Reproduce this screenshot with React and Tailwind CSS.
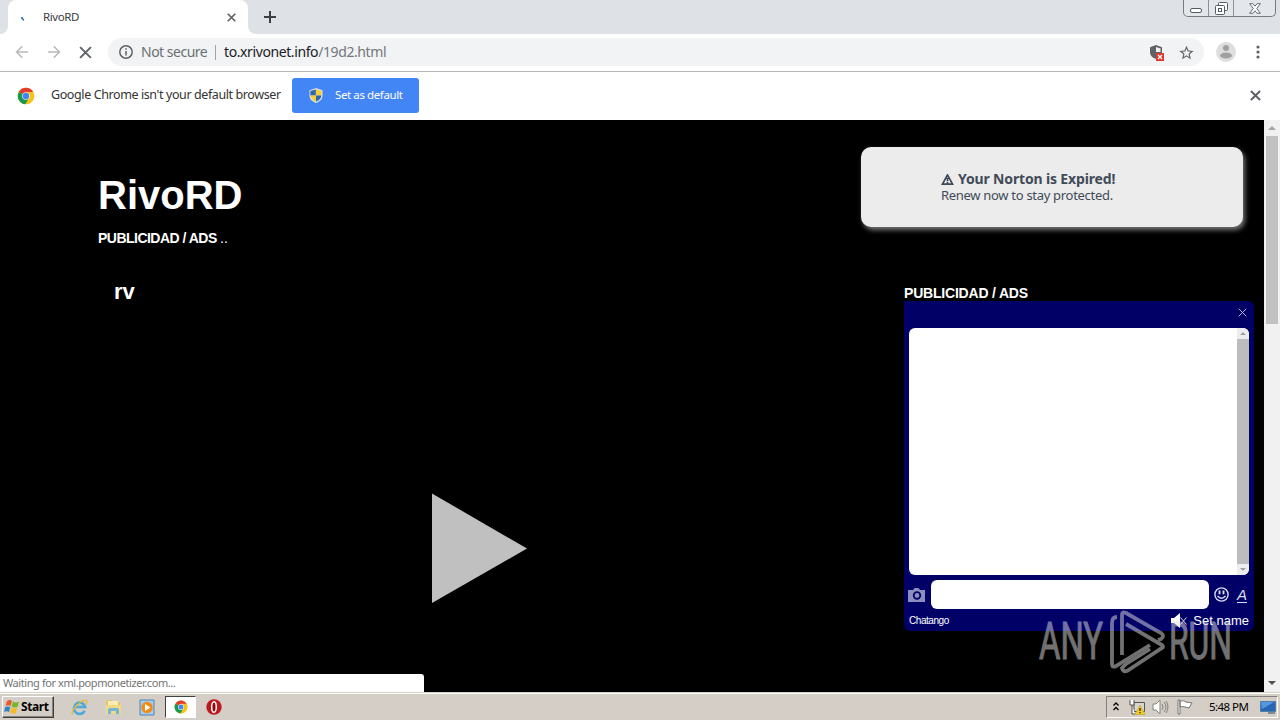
import React from 'react';

const uiFont = "font-['Noto_Sans','Open_Sans',sans-serif]";

const ChromeLogo = ({ className }) => (
    <svg viewBox="0 0 48 48" className={className}>
        <circle cx="24" cy="24" r="22" fill="#fbc116" />
        <path d="M24 24 4.9 13A22 22 0 0 1 43 13Z" fill="#e33b2e" />
        <path d="M24 24 4.9 13A22 22 0 0 0 22 46l11-18Z" fill="#1a9850" />
        <path d="M24 13h19a22 22 0 0 1-19 33l10-17Z" fill="#fbc116" />
        <circle cx="24" cy="24" r="10" fill="#fff" />
        <circle cx="24" cy="24" r="8.5" fill="#4285f4" />
    </svg>
);

const Cross = ({ className, width = 2 }) => (
    <svg viewBox="0 0 12 12" className={className} fill="none" stroke="currentColor" strokeWidth={width}>
        <path d="M1 1l10 10M11 1L1 11" />
    </svg>
);

const Arrow = ({ className }) => (
    <svg viewBox="0 0 16 16" className={className} fill="none" stroke="#bababa" strokeWidth="1.8">
        <path d="M15 8H2M8.3 1.5L1.8 8l6.5 6.5" />
    </svg>
);

const WindowButtons = () => (
    <div className="ml-auto mr-[4px] flex h-[17px] w-[93px] rounded-b-[5px] border border-t-0 border-[#777b83] bg-[#e3e6eb]">
        <div className="flex w-[25px] items-end justify-center border-r border-[#8b8f96] pb-[3px]">
            <svg viewBox="0 0 13 5" className="h-[5px] w-[13px]"><rect x=".5" y=".5" width="11" height="4" rx="1.5" fill="#fff" stroke="#555a65" /></svg>
        </div>
        <div className="flex w-[25px] justify-center border-r border-[#8b8f96] pt-[2px]">
            <svg viewBox="0 0 13 13" className="h-[13px] w-[13px]" fill="#fff" stroke="#555a65">
                <rect x="3.5" y=".5" width="9" height="8" rx="1" />
                <rect x=".5" y="3.5" width="9" height="9" rx="1" />
                <rect x="3.5" y="6.5" width="3" height="3" />
            </svg>
        </div>
        <div className="flex flex-1 justify-center pt-[3px]">
            <svg viewBox="0 0 12 11" className="h-[11px] w-[12px]" fill="#fff" stroke="#555a65" strokeWidth=".9">
                <path d="M.7.7h3.2L6 3.2 8.1.7h3.2L7.8 5.5l3.5 4.8H8.1L6 7.8l-2.1 2.5H.7l3.5-4.8Z" />
            </svg>
        </div>
    </div>
);

const TabStrip = () => (
    <div className="flex h-[34px] bg-[#dee1e6]">
        <div className="flex w-2 items-end">
            <svg viewBox="0 0 8 8" className="h-2 w-2"><path d="M8 0v8H0a8 8 0 0 0 8-8" fill="#fff" /></svg>
        </div>
        <div className="flex w-[240px] items-center rounded-t-[8px] bg-white pl-[12px] pr-[12px]">
            <svg viewBox="0 0 6 6" className="mt-[4px] h-[6px] w-[6px]"><path d="M1.800 1q.2 2 2 3.300" stroke="#4477b5" strokeWidth="2" fill="none" /></svg>
            <span className="ml-[17px] text-[11.500px] leading-[16px] tracking-[-0.4px] text-[#3c4043]">RivoRD</span>
            <Cross className="ml-auto h-[9px] w-[9px] text-[#5f6368]" width={2.3} />
        </div>
        <div className="flex w-2 items-end">
            <svg viewBox="0 0 8 8" className="h-2 w-2"><path d="M0 0v8h8a8 8 0 0 1-8-8" fill="#fff" /></svg>
        </div>
        <svg viewBox="0 0 12 12" className="ml-[8px] mt-[11px] h-[12px] w-[12px]"><path d="M6 0v12M0 6h12" stroke="#3c4043" strokeWidth="2" /></svg>
        <WindowButtons />
    </div>
);

const Toolbar = () => (
    <div className="flex h-[38px] items-center border-b border-[#b5b8b5] bg-white pb-px pl-[15px]">
        <Arrow className="h-[14px] w-[14px]" />
        <Arrow className="ml-[18px] h-[14px] w-[14px] rotate-180" />
        <Cross className="ml-[18px] h-[13px] w-[13px] text-[#5f6368]" width={1.8} />
        <div className="ml-[16px] flex h-[28px] w-[1096px] items-center rounded-full bg-[#f1f3f4] pl-[11px] pr-[10px]">
            <svg viewBox="0 0 14 14" className="h-[14px] w-[14px]" fill="none" stroke="#5f6368" strokeWidth="1.5">
                <circle cx="7" cy="7" r="6.2" />
                <path d="M7 6v4.4M7 3.2v1.6" />
            </svg>
            <span className="ml-[8px] w-[67px] whitespace-nowrap text-[14px] leading-[20px] tracking-[-0.5px] text-[#6b6f73]">Not secure</span>
            <span className="ml-[7px] h-[15px] w-px bg-[#a0a3a6]" />
            <span className="ml-[8px] whitespace-nowrap text-[14px] leading-[20px] tracking-[-0.4px] text-[#202124]">
                to.xrivonet.info<span className="text-[#73777b]">/19d2.html</span>
            </span>
            <svg viewBox="0 0 14 16" className="ml-auto mr-[15px] mt-[2px] h-[16px] w-[14px]">
                <path d="M6 0l6 2.2V7c0 3.5-2.5 6-6 7-3.500-1-6-3.500-6-7V2.200Z" fill="#5f6368" />
                <path d="M6 2l4.500 1.500V7H6Z" fill="#f1f3f4" />
                <path d="M6 8h8v8H6Z" fill="#df382c" />
                <path d="M8 10l4 4M12 10l-4 4" stroke="#fff" strokeWidth="1.300" />
            </svg>
            <svg viewBox="1.500 1 21 21" className="h-[15px] w-[15px]" fill="#5f6368">
                <path d="M22 9.240l-7.190-.62L12 2 9.190 8.630 2 9.240l5.460 4.730L5.820 21 12 17.270 18.180 21l-1.630-7.030L22 9.240zM12 15.400l-3.760 2.270 1-4.280-3.320-2.880 4.380-.38L12 6.100l1.710 4.040 4.380.38-3.320 2.880 1 4.280L12 15.400z" />
            </svg>
        </div>
        <svg viewBox="0 0 20 20" className="ml-[12px] h-[20px] w-[20px]">
            <circle cx="10" cy="10" r="10" fill="#dedede" />
            <circle cx="10" cy="6" r="3" fill="#a0a0a0" />
            <ellipse cx="10" cy="13.500" rx="6" ry="3" fill="#a0a0a0" />
        </svg>
        <svg viewBox="0 0 4 14" className="ml-[20px] h-[14px] w-[4px]" fill="#5f6368">
            <circle cx="2" cy="2" r="1.600" />
            <circle cx="2" cy="7" r="1.600" />
            <circle cx="2" cy="12" r="1.600" />
        </svg>
    </div>
);

const InfoBar = () => (
    <div className="flex h-[48px] items-center bg-white pb-[2px] pl-[17px] pr-[19px]">
        <ChromeLogo className="mt-px h-[18px] w-[18px]" />
        <span className="ml-[16px] w-[241px] whitespace-nowrap text-[12.500px] leading-[18px] tracking-[-0.4px] text-[#333]">
            Google Chrome isn&apos;t your default browser
        </span>
        <button className="flex h-[35px] w-[127px] items-center rounded-[3px] bg-[#4285f4] pl-[17px] text-[11.500px] tracking-[-0.4px] text-white">
            <svg viewBox="0 0 14 16" className="mr-[12px] h-[15px] w-[14px]">
                <path d="M7 0l7 2.500V8c0 4-3 6.500-7 8-4-1.500-7-4-7-8V2.500Z" fill="#d7dfe0" />
                <path d="M6.800 1.500V8H1V3.300Z" fill="#3067aa" />
                <path d="M7 1.500l6 1.800V8H7Z" fill="#f4cf37" />
                <path d="M1.200 8H7v6.500Q2 12.500 1.200 8" fill="#f4cf37" />
                <path d="M7 8h5.800Q12 12.500 7 14.500" fill="#3067aa" />
            </svg>
            Set as default
        </button>
        <Cross className="ml-auto mt-px h-[11px] w-[11px] text-[#5f6368]" width={2.2} />
    </div>
);

const NortonPopup = () => (
    <div className="absolute left-[861px] top-[27px] h-[80px] w-[382px] rounded-[10px] bg-[#ececec] pl-[80px] pt-[24px] text-[#414b58] shadow-[2px_3px_5px_#777]">
        <p className="flex items-center whitespace-nowrap text-[14px] font-bold leading-[16px] tracking-[-0.15px]">
            <svg viewBox="0 0 13 12" className="mr-[4px] h-[11px] w-[13px]" fill="none" stroke="#414b58" strokeWidth="1.900">
                <path d="M6.500 1L1 11h11ZM6.500 4v3.600M6.500 8.400v1.600" />
            </svg>
            Your Norton is Expired!
        </p>
        <p className="whitespace-nowrap text-[13px] leading-[16px] tracking-[-0.3px]">Renew now to stay protected.</p>
    </div>
);

const ChatBox = () => (
    <div className="flex h-[330px] w-[350px] flex-col rounded-[6px] rounded-tl-none bg-[#000066] px-[5px] font-['Liberation_Sans',sans-serif] text-white">
        <div className="flex h-[27px] shrink-0 justify-end pr-[2px] pt-[7px]">
            <Cross className="h-[9px] w-[9px] text-[#b8b8dc]" width={1.3} />
        </div>
        <div className="flex h-[247px] shrink-0 justify-end overflow-hidden rounded-[6px] bg-white">
            <div className="flex w-[12px] flex-col items-center justify-between bg-[#ededed]">
                <svg viewBox="0 0 6 3" className="my-[4px] h-[3px] w-[6px]"><path d="M0 3l3-3 3 3" fill="#a0a0a0" /></svg>
                <div className="w-full flex-1 bg-[#bcbcbc]" />
                <svg viewBox="0 0 6 3" className="my-[4px] h-[3px] w-[6px]"><path d="M0 0l3 3 3-3" fill="#a0a0a0" /></svg>
            </div>
        </div>
        <div className="-ml-px mt-[5px] flex h-[29px] shrink-0 items-center">
            <svg viewBox="0 0 17 14" className="h-[14px] w-[17px]">
                <path d="M0 2h5l1.500-2h4L12 2h5v12H0Z" fill="#8c8cbd" />
                <circle cx="9" cy="7.500" r="3.300" fill="#8c8cbd" stroke="#000066" strokeWidth="1.800" />
            </svg>
            <div className="ml-[6px] h-[29px] w-[278px] rounded-[6px] bg-white" />
            <svg viewBox="0 0 15 15" className="ml-[5px] h-[15px] w-[15px]" fill="none" stroke="#dadaf0" strokeWidth="1.400">
                <circle cx="7.500" cy="7.500" r="6.600" />
                <path d="M5.500 3.500v3.800M9.500 3.500v3.800" strokeWidth="1.900" />
                <path d="M3.500 9q4 4.500 8 0" />
            </svg>
            <span className="ml-[8px] text-[15px] italic leading-[15px] text-[#dadaf0] underline underline-offset-2">A</span>
        </div>
        <div className="flex h-[22px] items-center pt-[2px]">
            <span className="text-[10px] leading-[12px] tracking-[-0.45px]">Chatango</span>
            <svg viewBox="0 0 17 16" className="ml-auto mr-[5px] h-[16px] w-[17px]">
                <path d="M0 5h3l6-5v15l-6-5H0Z" fill="#fff" />
                <path d="M9.500 4.500l6 7M15.500 4.500l-6 7" stroke="#dadaf0" />
            </svg>
            <span className="whitespace-nowrap text-[13px] leading-[16px]">Set name</span>
        </div>
    </div>
);

const Watermark = () => (
    <svg viewBox="0 0 210 80" className="absolute left-[1035px] top-[485px] h-[80px] w-[210px] opacity-50" fontFamily="Roboto, sans-serif">
        <g fill="#e2e2e2" stroke="#e2e2e2" strokeWidth=".9" fontSize="51">
            <text x="4" y="54" textLength="64" lengthAdjust="spacingAndGlyphs">ANY</text>
            <text x="134" y="54" textLength="63" lengthAdjust="spacingAndGlyphs">RUN</text>
        </g>
        <g fill="none" stroke="#e2e2e2" strokeWidth="3.800">
            <path d="M82 12q-5 0-5 6v41q0 4 4 2l34-21" />
            <path d="M87 50V10q0-4 4-2l35 20q4 3 0 6l-3 1" />
            <path d="M91 19l36 21q2 2 0 3L92 66q-4 1-5-3l4-4 24-15" />
        </g>
    </svg>
);

const PageScrollbar = () => (
    <div className="flex w-4 flex-col items-center bg-[#f1f1f1]">
        <svg viewBox="0 0 8 4" className="my-[6px] h-[4px] w-[8px]"><path d="M0 4l4-4 4 4" fill="#a3a3a3" /></svg>
        <div className="h-[188px] w-[12px] bg-[#c1c1c1]" />
        <svg viewBox="0 0 8 4" className="mb-[7px] mt-auto h-[4px] w-[8px]"><path d="M0 0l4 4 4-4" fill="#505050" /></svg>
    </div>
);

const WebPage = () => (
    <div className="relative flex h-[572px] bg-black">
        <main className="flex flex-1 pl-[98px] font-['Liberation_Sans',sans-serif] text-white">
            <section className="w-[806px] pt-[50px]">
                <h1 className="text-[40px] font-bold leading-[50px]">RivoRD</h1>
                <p className="mt-[9px] text-[14px] font-bold leading-[18px] tracking-[-0.52px]">PUBLICIDAD / ADS <span className="font-normal tracking-normal">..</span></p>
                <h2 className="ml-[16px] mt-[32px] text-[22px] font-bold leading-[26px]">rv</h2>
                <svg viewBox="0 0 95 110" className="ml-[334px] mt-[188px] h-[110px] w-[95px]"><path d="M0 .5l95 55L0 110Z" fill="#c0c0c0" /></svg>
            </section>
            <aside className="w-[350px] pt-[164px]">
                <p className="text-[14px] font-bold leading-[18px] tracking-[-0.2px]">PUBLICIDAD / ADS</p>
                <div className="-mt-px"><ChatBox /></div>
            </aside>
        </main>
        <PageScrollbar />
        <NortonPopup />
        <Watermark />
        <div className="absolute bottom-0 left-0 h-[18px] w-[424px] whitespace-nowrap rounded-tr-[3px] bg-white pl-[3px] text-[11px] leading-[18px] tracking-[-0.42px] text-[#747474]">
            Waiting for xml.popmonetizer.com...
        </div>
    </div>
);

const WindowsFlag = () => (
    <svg viewBox="0 0 16 16" className="h-[16px] w-[16px]">
        <path d="M3 2q3-2 5 0L6.500 7Q4 5.500 1.500 7Z" fill="#e65d27" />
        <path d="M9 2.500q3 2 6 0L13.500 8Q10 9 7.500 7.500Z" fill="#78b72d" />
        <path d="M1.200 8q3-1 5 0L5 13q-3-1.500-5 0Z" fill="#3481c8" />
        <path d="M7.200 8.500q3 1.500 6 .3L12 14q-3 1.500-6-.5Z" fill="#f3bd25" />
    </svg>
);

const Taskbar = () => (
    <div className="flex h-[28px] border-t border-[#d6d2ca] bg-[#d5cec6] pt-px text-black shadow-[inset_0_1px_#fff]">
        <div className="ml-[2px] mt-[2px] flex h-[22px] w-[52px] items-center border border-b-[#404040] border-l-white border-r-[#404040] border-t-white pl-px shadow-[inset_-1px_-1px_#858079]">
            <WindowsFlag />
            <span className="ml-px text-[12px] font-bold leading-[16px] tracking-[-0.4px]">Start</span>
        </div>
        <div className="flex items-center pl-[17px]">
            <svg viewBox="0 0 18 18" className="h-[17px] w-[17px]" fill="none">
                <path d="M14.500 12.500A6 6 0 1 1 15 8.500H5" stroke="#4ba9dc" strokeWidth="2.800" />
                <path d="M2 16C-2 13 12-1 16.500 2q1 1-1 4" stroke="#e8ba35" strokeWidth="1.500" />
            </svg>
            <svg viewBox="0 0 17 16" className="ml-[17px] h-[16px] w-[17px]">
                <path d="M1 3l1-2h5l1 2h7v12H1Z" fill="#e5c564" />
                <path d="M3 2h10v9H3Z" fill="#f8edb2" />
                <path d="M1 6h15v9H1Z" fill="#f2da83" />
                <path d="M3 15v-4q0-2 2-2h7q2 0 2 2v4h-3v-3H6v3Z" fill="#72b5db" />
            </svg>
            <svg viewBox="0 0 16 17" className="ml-[17px] h-[17px] w-[16px]">
                <path d="M1 1h14v15H1Z" fill="#a8cbe9" stroke="#4b85bd" />
                <circle cx="8" cy="8.500" r="5.700" fill="#f28a17" />
                <path d="M6 5l5.500 3.500L6 12Z" fill="#fff" />
            </svg>
            <div className="ml-[10px] flex h-[22px] w-[31px] items-center justify-center border border-b-white border-l-[#404040] border-r-white border-t-[#404040] bg-white">
                <ChromeLogo className="h-[14px] w-[14px]" />
            </div>
            <svg viewBox="0 0 16 16" className="ml-[10px] h-[16px] w-[16px]">
                <circle cx="8" cy="8" r="7.700" fill="#bd1820" />
                <ellipse cx="8" cy="8" rx="2.300" ry="5.300" fill="#8e0c10" stroke="#fff" strokeWidth="1.500" />
            </svg>
        </div>
        <div className="ml-auto mr-[2px] mt-[2px] flex h-[22px] w-[172px] items-center border border-b-white border-l-[#85807a] border-r-white border-t-[#85807a] pl-[6px]">
            <svg viewBox="0 0 6 9" className="mb-[2px] h-[9px] w-[6px]" fill="none" stroke="#000" strokeWidth="1.300">
                <path d="M.5 3.500L3 1l2.500 2.500M.5 8L3 5.500 5.500 8" />
            </svg>
            <svg viewBox="0 0 16 16" className="ml-[10px] h-[16px] w-[16px]">
                <path d="M5 3.500h10.500v9H5Z" fill="#d6d6d2" stroke="#555" />
                <path d="M1 1v5h4V1M3 6v9h3" fill="#fff" stroke="#555" />
                <path d="M11 6l5 9.500H6Z" fill="#f5ce20" stroke="#b89412" strokeWidth=".5" />
                <path d="M11 9v3M11 13v1.300" stroke="#222" strokeWidth="1.300" />
            </svg>
            <svg viewBox="0 0 17 16" className="ml-[7px] h-[16px] w-[17px]" fill="none" stroke="#85827e">
                <path d="M1 5h3l4-4v14l-4-4H1Z" fill="#fff" />
                <path d="M10 5q2 3 0 6M12 3q4 5 0 10M14 2q4 6 0 12" />
            </svg>
            <svg viewBox="0 0 16 16" className="ml-[8px] h-[16px] w-[16px]" fill="#fff" stroke="#77736e">
                <path d="M1 1h2v14H1ZM3 2q4-1 6 1l6 1-3 5-4-1q-2-1-5 0Z" />
            </svg>
            <span className="ml-[16px] w-[40px] whitespace-nowrap text-[11.500px] leading-[16px] tracking-[-0.55px]">5:48 PM</span>
            <svg viewBox="0 0 16 13" className="ml-[11px] h-[13px] w-[16px]">
                <path d="M.5.500h15v10H.5Z" fill="#2866b3" stroke="#507ea7" />
                <path d="M1 1h13L2 8Z" fill="#5698df" />
                <path d="M8 12h7" stroke="#2c4667" />
            </svg>
        </div>
    </div>
);

const App = () => (
    <div className={`h-[720px] w-[1280px] overflow-hidden bg-white ${uiFont}`}>
        <TabStrip />
        <Toolbar />
        <InfoBar />
        <WebPage />
        <Taskbar />
    </div>
);

export default App;
